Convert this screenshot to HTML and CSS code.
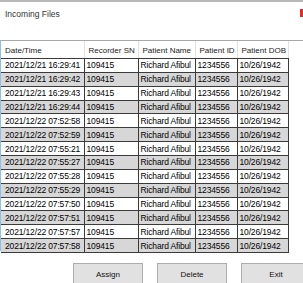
FILE: index.html
```html
<!DOCTYPE html>
<html>

<head>
    <title>Incoming Files</title>
    <link rel="stylesheet" href="styles.css">
</head>

<body>
    <div class="window">
        <div class="titlebar">
            <span class="title">Incoming Files</span>
            <span class="close"></span>
        </div>
        <div class="grid">
            <table>
                <colgroup>
                    <col class="c-date">
                    <col class="c-sn">
                    <col class="c-name">
                    <col class="c-id">
                    <col class="c-dob">
                </colgroup>
                <thead>
                    <tr>
                        <th>Date/Time</th>
                        <th>Recorder SN</th>
                        <th>Patient Name</th>
                        <th>Patient ID</th>
                        <th>Patient DOB</th>
                    </tr>
                </thead>
                <tbody>
                    <tr><td>2021/12/21 16:29:41</td><td>109415</td><td>Richard Afibul</td><td>1234556</td><td>10/26/1942</td></tr>
                    <tr><td>2021/12/21 16:29:42</td><td>109415</td><td>Richard Afibul</td><td>1234556</td><td>10/26/1942</td></tr>
                    <tr><td>2021/12/21 16:29:43</td><td>109415</td><td>Richard Afibul</td><td>1234556</td><td>10/26/1942</td></tr>
                    <tr><td>2021/12/21 16:29:44</td><td>109415</td><td>Richard Afibul</td><td>1234556</td><td>10/26/1942</td></tr>
                    <tr><td>2021/12/22 07:52:58</td><td>109415</td><td>Richard Afibul</td><td>1234556</td><td>10/26/1942</td></tr>
                    <tr><td>2021/12/22 07:52:59</td><td>109415</td><td>Richard Afibul</td><td>1234556</td><td>10/26/1942</td></tr>
                    <tr><td>2021/12/22 07:55:21</td><td>109415</td><td>Richard Afibul</td><td>1234556</td><td>10/26/1942</td></tr>
                    <tr><td>2021/12/22 07:55:27</td><td>109415</td><td>Richard Afibul</td><td>1234556</td><td>10/26/1942</td></tr>
                    <tr><td>2021/12/22 07:55:28</td><td>109415</td><td>Richard Afibul</td><td>1234556</td><td>10/26/1942</td></tr>
                    <tr><td>2021/12/22 07:55:29</td><td>109415</td><td>Richard Afibul</td><td>1234556</td><td>10/26/1942</td></tr>
                    <tr><td>2021/12/22 07:57:50</td><td>109415</td><td>Richard Afibul</td><td>1234556</td><td>10/26/1942</td></tr>
                    <tr><td>2021/12/22 07:57:51</td><td>109415</td><td>Richard Afibul</td><td>1234556</td><td>10/26/1942</td></tr>
                    <tr><td>2021/12/22 07:57:57</td><td>109415</td><td>Richard Afibul</td><td>1234556</td><td>10/26/1942</td></tr>
                    <tr><td>2021/12/22 07:57:58</td><td>109415</td><td>Richard Afibul</td><td>1234556</td><td>10/26/1942</td></tr>
                </tbody>
            </table>
        </div>
        <div class="actions">
            <button>Assign</button>
            <button>Delete</button>
            <button>Exit</button>
        </div>
    </div>
</body>

</html>
```

FILE: styles.css
```css
body {
    margin: 0;
    font-family: "Liberation Sans", Arial, sans-serif;
    font-size: 8px;
    color: #111;
    background: #fff;
    overflow: hidden;
}

.window {
    width: 303px;
    height: 283px;
    border-top: 2px solid #b8b8b8;
    box-sizing: border-box;
    overflow: hidden;
}

.titlebar {
    position: relative;
    height: 38px;
    padding: 7px 0 0 5px;
    box-sizing: border-box;
    line-height: 10px;
    font-size: 8.5px;
    color: #333;
}

.close {
    position: absolute;
    top: 7px;
    right: 0;
    width: 3px;
    height: 8px;
    background: #e0302a;
}

.grid {
    height: 211px;
    border-top: 1px solid #a8a8a8;
    border-left: 1px solid #8fbfe6;
    box-sizing: border-box;
}

table {
    border-collapse: collapse;
    table-layout: fixed;
    width: 287px;
}

.c-date { width: 83px; }
.c-sn { width: 54px; }
.c-name { width: 57px; }
.c-id { width: 42px; }
.c-dob { width: 51px; }

th {
    height: 16px;
    padding: 1px 0 0 4px;
    text-align: left;
    font-weight: normal;
    white-space: nowrap;
    overflow: hidden;
    color: #222;
    border-right: 1px solid #e2e2e2;
    border-bottom: 1px solid #3a3a3a;
}

td {
    height: 12.86px;
    padding: 0 0 0 2px;
    font-size: 8.5px;
    letter-spacing: -0.15px;
    color: #000;
    white-space: nowrap;
    overflow: hidden;
    border: 1px solid #3a3a3a;
    border-left: none;
}

td:first-child {
    padding-left: 4px;
}

tbody tr:nth-child(even) td {
    background: #d7d7d7;
}

.actions {
    display: flex;
    gap: 14px;
    padding: 12px 0 0 73px;
}

button {
    flex: none;
    width: 70px;
    height: 23px;
    padding: 0;
    font-family: inherit;
    font-size: 8px;
    color: #111;
    background: #e1e1e1;
    border: 1px solid #adadad;
}
```
